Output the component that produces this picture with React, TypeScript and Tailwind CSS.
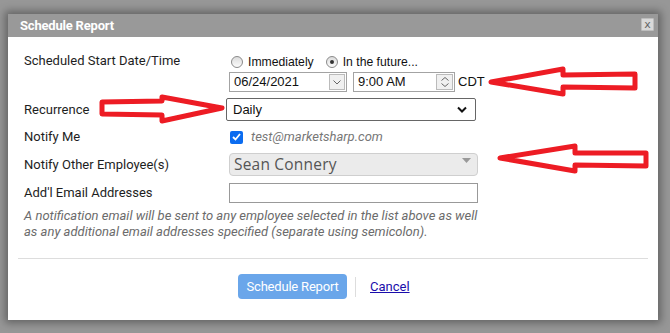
import React from "react";

const labelCls = "w-[205px] shrink-0 text-[13px] text-[#1e1e1e] font-['Roboto',sans-serif]";
const winFont = "font-['Liberation_Sans',Arial,sans-serif]";

function Arrows() {
  return (
    <svg
      className="absolute inset-0 pointer-events-none"
      width="670"
      height="333"
      viewBox="0 0 670 333"
    >
      <g fill="none" stroke="#ed1c24" strokeWidth="5" strokeLinejoin="round">
        <polygon points="491,82 563,69 563,75 635,74 635,88 563,87 563,94" />
        <polygon points="102,102 162,101 162,97 222,108 162,121 162,115 102,114" />
        <polygon points="500,158 575,146 575,153 646,153 646,166 575,165 575,171" />
      </g>
    </svg>
  );
}

function Radio({ checked, label }: { checked?: boolean; label: string }) {
  return (
    <label className="flex items-center gap-[5px]">
      <span className="w-[12px] h-[12px] rounded-full border border-[#8a8a8a] bg-gradient-to-b from-[#dcdcdc] to-[#fbfbfb] flex items-center justify-center">
        {checked && <span className="w-[4px] h-[4px] rounded-full bg-[#333]" />}
      </span>
      <span className={`text-[12.2px] text-[#111] ${winFont}`}>{label}</span>
    </label>
  );
}

export default function App() {
  return (
    <div className="relative w-[670px] h-[333px] overflow-hidden bg-[#979797]">
      <div className="pt-[14px] pl-[8px]">
        <div className="w-[650px] h-[306px] bg-white shadow-[0_0_8px_3px_rgba(0,0,0,0.35)] flex flex-col">
          {/* title bar */}
          <div className="h-[23px] bg-[#999999] flex items-center justify-between pl-[12px] pr-[4px]">
            <span className="text-white text-[13px] font-bold font-['Roboto',sans-serif] tracking-[-0.2px]">
              Schedule Report
            </span>
            <span className="w-[13px] h-[13px] mt-[-2px] bg-[#d9d9d9] border border-[#bdbdbd] rounded-[1px] flex items-center justify-center text-[11px] leading-none text-[#666] font-['DejaVu_Sans',sans-serif]">
              x
            </span>
          </div>

          {/* body */}
          <div className="pt-[18px] pl-[16px] pr-[16px]">
            {/* start date/time */}
            <div className="flex">
              <div className={`${labelCls} h-[14px] leading-[14px] mt-[-1px]`}>Scheduled Start Date/Time</div>
              <div className="flex flex-col">
                <div className="h-[14px] flex items-center gap-[12px] ml-[2px]">
                  <Radio label="Immediately" />
                  <Radio checked label="In the future..." />
                </div>
                <div className="mt-[3px] h-[20px] flex items-center">
                  <div className="w-[118px] h-[20px] border border-[#a3a3a3] flex items-center">
                    <span className={`flex-1 pl-[4px] text-[13px] text-[#111] ${winFont}`}>06/24/2021</span>
                    <span className="w-[16px] h-[16px] mr-[1px] border border-[#bbb] bg-[#f0f0f0] flex items-center justify-center">
                      <svg width="8" height="5" viewBox="0 0 8 5">
                        <path d="M0.5 0.5 L4 4 L7.5 0.5" fill="none" stroke="#666" strokeWidth="1" />
                      </svg>
                    </span>
                  </div>
                  <div className="ml-[6px] w-[102px] h-[20px] border border-[#a3a3a3] flex items-center">
                    <span className={`flex-1 pl-[4px] text-[13px] text-[#111] ${winFont}`}>9:00 AM</span>
                    <span className="w-[17px] h-[16px] mr-[1px] border border-[#bbb] bg-[#f0f0f0] flex flex-col items-center justify-center gap-[2px]">
                      <svg width="8" height="4" viewBox="0 0 8 4">
                        <path d="M0.5 3.5 L4 0.5 L7.5 3.5" fill="none" stroke="#666" strokeWidth="1" />
                      </svg>
                      <svg width="8" height="4" viewBox="0 0 8 4">
                        <path d="M0.5 0.5 L4 3.5 L7.5 0.5" fill="none" stroke="#666" strokeWidth="1" />
                      </svg>
                    </span>
                  </div>
                  <span className={`ml-[3px] text-[13px] text-[#111] ${winFont}`}>CDT</span>
                </div>
              </div>
            </div>

            {/* recurrence */}
            <div className="mt-[6px] h-[23px] flex items-center">
              <div className={labelCls}>Recurrence</div>
              <div className="ml-[-3px] w-[250px] h-[23px] border border-[#666] rounded-[2px] flex items-center justify-between pl-[6px] pr-[8px]">
                <span className={`text-[13px] text-[#111] ${winFont}`}>Daily</span>
                <svg width="10" height="7" viewBox="0 0 10 7">
                  <path d="M1 1.5 L5 5.5 L9 1.5" fill="none" stroke="#111" strokeWidth="2" />
                </svg>
              </div>
            </div>

            {/* notify me */}
            <div className="mt-[7px] h-[18px] flex items-center">
              <div className={labelCls}>Notify Me</div>
              <span className="ml-[1px] w-[13px] h-[13px] rounded-[2px] bg-[#0b6cf0] flex items-center justify-center">
                <svg width="9" height="8" viewBox="0 0 9 8">
                  <path d="M1 4 L3.5 6.5 L8 1" fill="none" stroke="white" strokeWidth="1.8" />
                </svg>
              </span>
              <span className="ml-[8px] text-[13px] italic text-[#777] font-['Roboto',sans-serif]">test@marketsharp.com</span>
            </div>

            {/* notify other */}
            <div className="mt-[7px] h-[23px] flex items-center">
              <div className={labelCls}>Notify Other Employee(s)</div>
              <div className="w-[249px] h-[23px] border border-[#cfcfcf] rounded-[4px] bg-[#ebebeb] flex items-center justify-between pl-[4px] pr-[6px]">
                <span className="text-[15.5px] text-[#555] font-['Open_Sans',sans-serif] tracking-[0.2px]">Sean Connery</span>
                <svg width="9" height="5" viewBox="0 0 9 5" className="mt-[-8px]">
                  <path d="M0 0 L9 0 L4.5 5 Z" fill="#999" />
                </svg>
              </div>
            </div>

            {/* additional emails */}
            <div className="mt-[7px] h-[20px] flex items-center">
              <div className={labelCls}>Add'l Email Addresses</div>
              <div className="w-[249px] h-[20px] border border-[#999]" />
            </div>

            <p className="mt-[5px] text-[13px] leading-[16px] italic text-[#6b6b6b] font-['Roboto',sans-serif]">
              A notification email will be sent to any employee selected in the list above as well
              <br />
              as any additional email addresses specified (separate using semicolon).
            </p>
          </div>

          <div className="mt-[18px] mx-[10px] border-t border-[#dddddd]" />

          <div className="mt-[15px] pl-[230px] flex items-center">
            <button className="h-[25px] w-[109px] rounded-[4px] bg-[#6aa6ea] text-white text-[13px] font-['Roboto',sans-serif] tracking-[-0.2px]">
              Schedule Report
            </button>
            <span className="ml-[8px] w-px h-[20px] bg-[#dddddd]" />
            <a className="ml-[14px] text-[13px] text-[#1a0dab] underline font-['Roboto',sans-serif]">Cancel</a>
          </div>
        </div>
      </div>
      <Arrows />
    </div>
  );
}
